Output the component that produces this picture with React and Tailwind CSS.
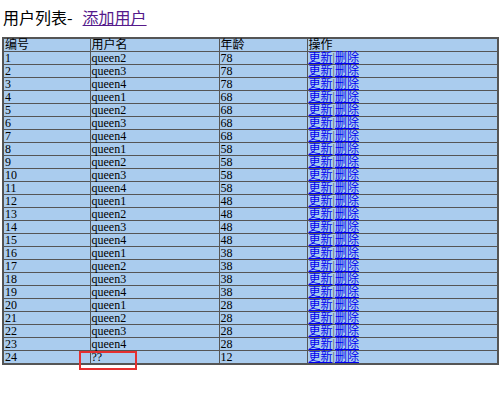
import React from 'react';

const rows = [
  [1, 'queen2', 78], [2, 'queen3', 78], [3, 'queen4', 78],
  [4, 'queen1', 68], [5, 'queen2', 68], [6, 'queen3', 68], [7, 'queen4', 68],
  [8, 'queen1', 58], [9, 'queen2', 58], [10, 'queen3', 58], [11, 'queen4', 58],
  [12, 'queen1', 48], [13, 'queen2', 48], [14, 'queen3', 48], [15, 'queen4', 48],
  [16, 'queen1', 38], [17, 'queen2', 38], [18, 'queen3', 38], [19, 'queen4', 38],
  [20, 'queen1', 28], [21, 'queen2', 28], [22, 'queen3', 28], [23, 'queen4', 28],
  [24, '??', 12],
];

const cell = 'border border-[#555] p-0 pl-[1px] h-[12px] leading-[12px] text-left font-normal align-middle';

export default function App() {
  return (
    <div className="relative w-[500px] h-[393px] bg-white text-black font-['Liberation_Serif','Noto_Sans_CJK_SC',serif] text-[12px]">
      {/* Title */}
      <div className="flex items-center pt-[7px] pl-[3px] h-[37px] items-start text-[16px] leading-[20px] font-['Noto_Sans_CJK_SC',sans-serif]">
        <span>用户列表-</span>
        <a href="#" className="ml-[10px] text-[#551a8b] underline">添加用户</a>
      </div>

      {/* Table */}
      <table className="ml-[2px] w-[497px] border-collapse border-2 border-[#555] bg-[#aaccee] table-fixed">
        <colgroup>
          <col className="w-[87px]" />
          <col className="w-[129px]" />
          <col className="w-[88px]" />
          <col />
        </colgroup>
        <thead>
          <tr>
            <th className={cell}>编号</th>
            <th className={cell}>用户名</th>
            <th className={cell}>年龄</th>
            <th className={cell}>操作</th>
          </tr>
        </thead>
        <tbody>
          {rows.map(([id, name, age]) => (
            <tr key={id}>
              <td className={cell}>{id}</td>
              <td className={cell}>{name}</td>
              <td className={cell}>{age}</td>
              <td className={cell}>
                <a href="#" className="text-[#0000ee] underline">更新</a>
                <span className="text-[#555]">|</span>
                <a href="#" className="text-[#0000ee] underline">删除</a>
              </td>
            </tr>
          ))}
        </tbody>
      </table>

      {/* red highlight box */}
      <div className="absolute left-[79px] top-[351px] w-[58px] h-[19px] border-2 border-[#e53030]" />
    </div>
  );
}
